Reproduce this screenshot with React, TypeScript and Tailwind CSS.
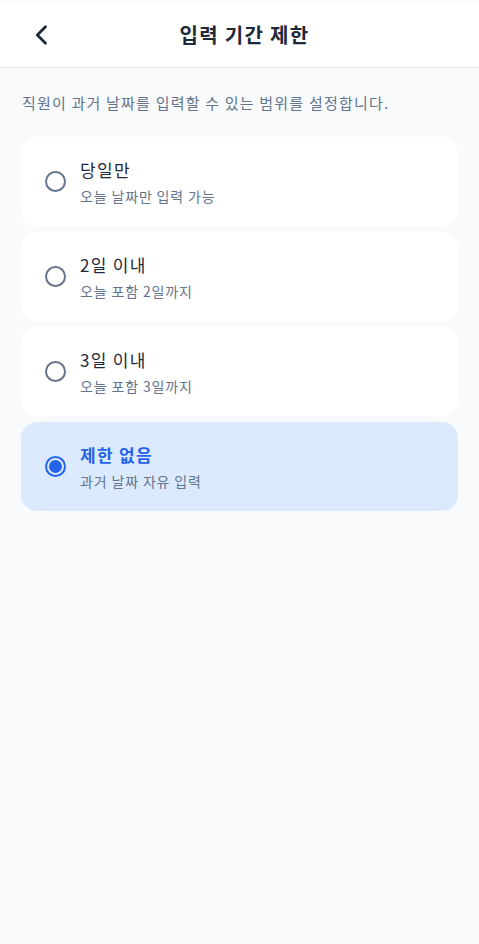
import React from "react";

const options = [
  { title: "당일만", sub: "오늘 날짜만 입력 가능", selected: false },
  { title: "2일 이내", sub: "오늘 포함 2일까지", selected: false },
  { title: "3일 이내", sub: "오늘 포함 3일까지", selected: false },
  { title: "제한 없음", sub: "과거 날짜 자유 입력", selected: true },
];

export default function App() {
  return (
    <div
      className="min-h-[944px] w-full bg-[#f8fafc]"
      style={{ fontFamily: '"Noto Sans CJK KR", "Noto Sans", sans-serif' }}
    >
      <div className="h-[3px] bg-[#f8fafc]" />
      <header className="relative flex h-[65px] items-center justify-center border-b border-[#e2e8f0] bg-white">
        <button className="absolute left-[28px] top-1/2 flex h-[28px] w-[28px] -translate-y-1/2 items-center justify-center text-[#1e293b]">
          <svg width="28" height="28" viewBox="0 0 24 24" fill="none" stroke="currentColor" strokeWidth="2.4" strokeLinecap="round" strokeLinejoin="round">
            <path d="M15 5l-7 7 7 7" />
          </svg>
        </button>
        <h1 className="pl-[10px] text-[20px] font-bold leading-[28px] tracking-[1.3px] text-[#1e293b]">입력 기간 제한</h1>
      </header>
      <p className="px-[22px] pt-[25px] text-[15px] leading-[20px] tracking-[1.2px] text-[#64748b]">
        직원이 과거 날짜를 입력할 수 있는 범위를 설정합니다.
      </p>
      <div className="mt-[24px] flex flex-col gap-[6px] px-[21px]">
        {options.map((o) => (
          <div
            key={o.title}
            className={
              o.selected
                ? "flex h-[89px] items-center rounded-[16px] bg-[#dbeafe] pl-[24px]"
                : "flex h-[89px] items-center rounded-[16px] bg-white pl-[24px]"
            }
          >
            {o.selected ? (
              <div className="flex h-[21px] w-[21px] items-center justify-center rounded-full border-2 border-[#2563eb]">
                <div className="h-[13px] w-[13px] rounded-full bg-[#2563eb]" />
              </div>
            ) : (
              <div className="h-[21px] w-[21px] rounded-full border-2 border-[#64748b]" />
            )}
            <div className="ml-[14px] flex flex-col">
              <span
                className={
                  o.selected
                    ? "text-[17px] font-bold leading-[26px] tracking-[1.3px] text-[#2563eb]"
                    : "text-[17px] leading-[26px] tracking-[1.3px] text-[#1e293b]"
                }
              >
                {o.title}
              </span>
              <span className="mt-[3px] text-[14px] leading-[20px] tracking-[0.85px] text-[#64748b]">{o.sub}</span>
            </div>
          </div>
        ))}
      </div>
    </div>
  );
}
